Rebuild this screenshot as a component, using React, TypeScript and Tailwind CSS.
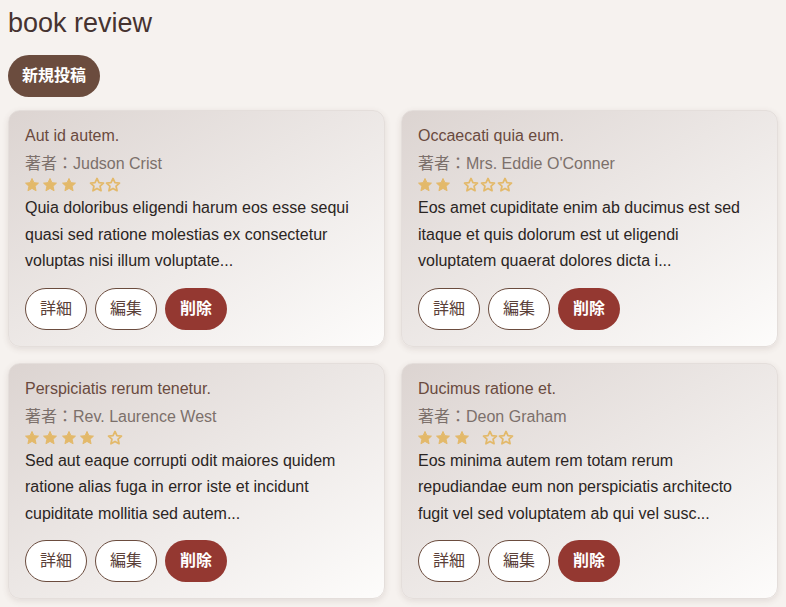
import React from "react";

type Review = {
  title: string;
  author: string;
  rating: number;
  body: string;
};

const reviews: Review[] = [
  {
    title: "Aut id autem.",
    author: "Judson Crist",
    rating: 3,
    body: "Quia doloribus eligendi harum eos esse sequi quasi sed ratione molestias ex consectetur voluptas nisi illum voluptate...",
  },
  {
    title: "Occaecati quia eum.",
    author: "Mrs. Eddie O'Conner",
    rating: 2,
    body: "Eos amet cupiditate enim ab ducimus est sed itaque et quis dolorum est ut eligendi voluptatem quaerat dolores dicta i...",
  },
  {
    title: "Perspiciatis rerum tenetur.",
    author: "Rev. Laurence West",
    rating: 4,
    body: "Sed aut eaque corrupti odit maiores quidem ratione alias fuga in error iste et incidunt cupiditate mollitia sed autem...",
  },
  {
    title: "Ducimus ratione et.",
    author: "Deon Graham",
    rating: 3,
    body: "Eos minima autem rem totam rerum repudiandae eum non perspiciatis architecto fugit vel sed voluptatem ab qui vel susc...",
  },
];

const FONT = "font-['Liberation_Sans','Noto_Sans_CJK_JP',sans-serif]";

const STAR =
  "M12 2.2l2.9 6.3 6.8.7-5.1 4.6 1.5 6.8L12 17.1 5.9 20.6l1.5-6.8L2.3 9.2l6.8-.7z";

function Star({ filled }: { filled: boolean }) {
  return (
    <svg width="16" height="16" viewBox="0 0 24 24" className="shrink-0">
      {filled ? (
        <path d={STAR} fill="#e3b96a" stroke="#e3b96a" strokeWidth="1.5" strokeLinejoin="round" />
      ) : (
        <path d={STAR} fill="none" stroke="#e3b96a" strokeWidth="2.6" strokeLinejoin="round" />
      )}
    </svg>
  );
}

function Stars({ rating }: { rating: number }) {
  return (
    <div className="h-[21px] flex items-center pt-[1px]">
      <div className="flex gap-[2.3px] -ml-[1px]">
        {Array.from({ length: rating }).map((_, i) => (
          <Star key={i} filled />
        ))}
      </div>
      <div className="ml-[12px] flex gap-[0.7px]">
        {Array.from({ length: 5 - rating }).map((_, i) => (
          <Star key={i} filled={false} />
        ))}
      </div>
    </div>
  );
}

function Card({ r }: { r: Review }) {
  return (
    <div className="rounded-[12px] border border-[#e4dedb] bg-gradient-to-br from-[#dcd4d1] to-[#fdfcfb] shadow-[0_2px_6px_rgba(80,60,50,0.12)] px-4 pt-[15px] pb-4 flex flex-col">
      <div className="text-[16px] leading-[20px] text-[#6a4a3e]">{r.title}</div>
      <div className="mt-2 text-[16px] leading-[20px] text-[#7c706b]">
        著者：{r.author}
      </div>
      <Stars rating={r.rating} />
      <p className="text-[16px] leading-[26.5px] text-[#2b2523]">{r.body}</p>
      <div className="mt-[13px] flex gap-2">
        <button className="h-[42px] w-[62px] rounded-full border border-[#6b4c3e] bg-white text-[16px] text-[#5a4038]">
          詳細
        </button>
        <button className="h-[42px] w-[62px] rounded-full border border-[#6b4c3e] bg-white text-[16px] text-[#5a4038]">
          編集
        </button>
        <button className="h-[42px] w-[62px] rounded-full bg-[#943831] text-[16px] font-semibold text-white">
          削除
        </button>
      </div>
    </div>
  );
}

export default function App() {
  return (
    <div className={`min-h-screen bg-[#f6f2ef] px-2 pt-[6px] pb-4 ${FONT}`}>
      <h1 className="text-[27px] leading-[34px] text-[#463330]">book review</h1>
      <button className="mt-[15px] h-[42px] rounded-full bg-[#6b4c3e] px-[14px] text-[16px] font-semibold text-white">
        新規投稿
      </button>
      <div className="mt-[13px] grid grid-cols-2 gap-x-4 gap-y-4">
        {reviews.map((r) => (
          <Card key={r.title} r={r} />
        ))}
      </div>
    </div>
  );
}
